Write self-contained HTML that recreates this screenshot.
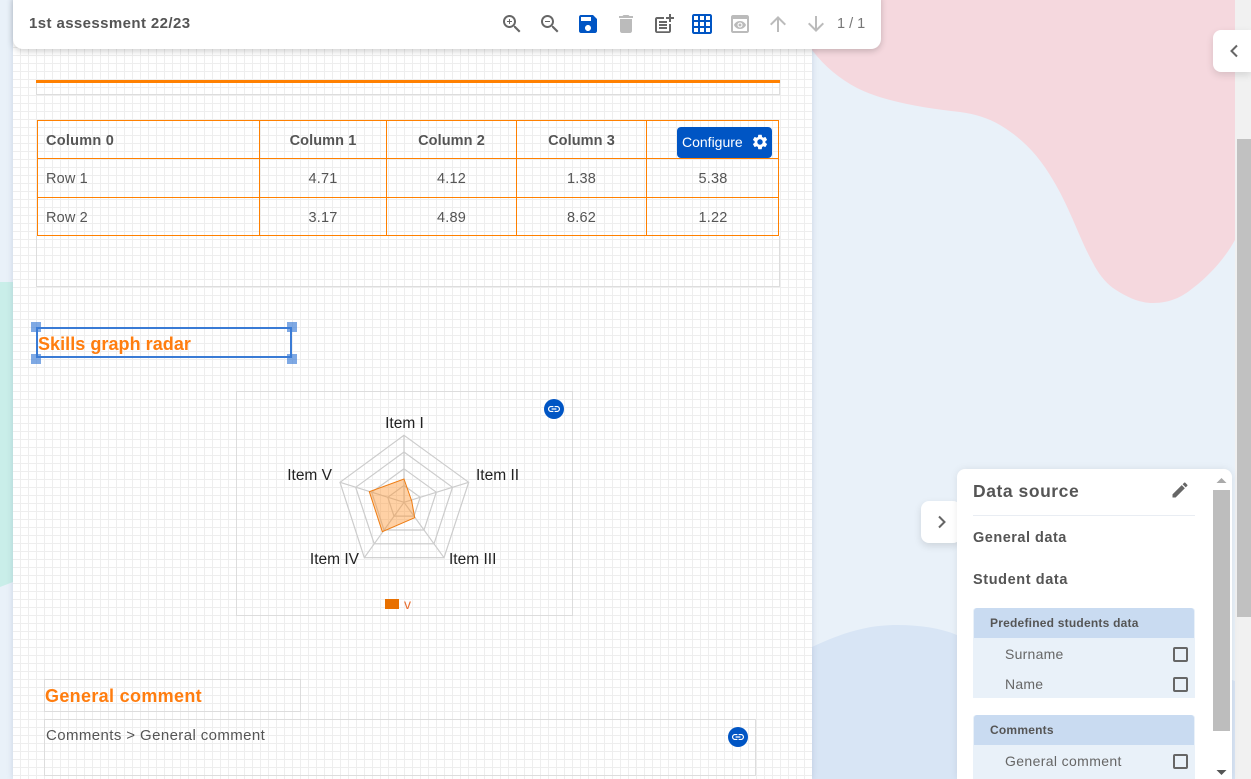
<!DOCTYPE html>
<html><head><meta charset="utf-8"><title>1st assessment 22/23</title>
<style>
html,body{margin:0;padding:0;width:1251px;height:779px;overflow:hidden;background:#e9f1f9;font-family:"Liberation Sans",sans-serif;color:#555}
#w{position:relative;width:1251px;height:779px;overflow:hidden}
.a{position:absolute}
.t{position:absolute;white-space:nowrap;line-height:20px}
.b{font-weight:bold}
svg{display:block}
.ic{position:absolute;top:12px;width:24px;height:24px}
.cell{position:absolute;text-align:center;font-size:14.5px;line-height:20px;letter-spacing:.2px;color:#555}
.cb{position:absolute;left:1173px;width:11px;height:11px;border:2px solid #666;border-radius:2px}
</style></head>
<body><div id="w">
<svg class="a" style="left:0;top:0" width="1251" height="779">
<path d="M812 50C825 67 840 79 857 88C885 102 925 108 960 112C975 114 988 118 1000 125C1025 140 1040 158 1053 180C1070 208 1080 240 1093 263C1098 273 1105 282 1113 288C1125 296 1138 303 1153 303C1170 303 1182 297 1193 288C1210 275 1225 258 1235 240V0H812Z" fill="#f5d8de"/>
<path d="M812 647C840 634 865 625 897 625C920 625 940 628 957 635C1050 640 1180 660 1235 681V779H812Z" fill="#d8e5f5"/>
<path d="M0 282H13V582L0 587Z" fill="#c9eee9"/>
</svg>
<div class="a" style="left:1235px;top:0;width:16px;height:779px;background:#f1f1f1"></div>
<div class="a" style="left:1237px;top:139px;width:14px;height:478px;background:#c1c1c1"></div>

<div class="a" style="left:13px;top:0;width:799px;height:779px;background-color:#fff;background-image:linear-gradient(to right,#eee 1px,transparent 1px),linear-gradient(to bottom,#eee 1px,transparent 1px);background-size:8px 8px;background-position:-1px 7px;box-shadow:0 0 6px rgba(60,80,120,.18)"></div>

<div class="a" style="left:36px;top:80px;width:742px;height:14px;border:1px solid #ddd;border-top:0"></div>
<div class="a" style="left:36px;top:80px;width:744px;height:3px;background:#ff8000"></div>

<div class="a" style="left:36px;top:236px;width:742px;height:50px;border:1px solid #ddd;border-top:0"></div>
<svg class="a" style="left:0;top:0" width="812" height="300" fill="none" stroke="#ff8000" stroke-width="1">
<path d="M37.5 120.5H778.5V235.5H37.5ZM37.5 158.5H778.5M37.5 197.5H778.5M259.5 120.5V235.5M386.5 120.5V235.5M516.5 120.5V235.5M646.5 120.5V235.5"/>
</svg>
<div class="t b" style="left:46px;top:131px;font-size:14.5px;letter-spacing:.25px">Column 0</div>
<div class="cell b" style="left:260px;top:131px;width:126px;letter-spacing:.1px">Column 1</div>
<div class="cell b" style="left:387px;top:131px;width:129px;letter-spacing:.1px">Column 2</div>
<div class="cell b" style="left:517px;top:131px;width:129px;letter-spacing:.1px">Column 3</div>
<div class="t" style="left:46px;top:169px;font-size:14.5px;letter-spacing:.15px">Row 1</div>
<div class="cell" style="left:260px;top:169px;width:126px">4.71</div>
<div class="cell" style="left:387px;top:169px;width:129px">4.12</div>
<div class="cell" style="left:517px;top:169px;width:129px">1.38</div>
<div class="cell" style="left:647px;top:169px;width:132px">5.38</div>
<div class="t" style="left:46px;top:208px;font-size:14.5px;letter-spacing:.15px">Row 2</div>
<div class="cell" style="left:260px;top:208px;width:126px">3.17</div>
<div class="cell" style="left:387px;top:208px;width:129px">4.89</div>
<div class="cell" style="left:517px;top:208px;width:129px">8.62</div>
<div class="cell" style="left:647px;top:208px;width:132px">1.22</div>

<div class="a" style="left:677px;top:127px;width:95px;height:31px;background:#0055c4;border-radius:4px"></div>
<div class="t" style="left:682px;top:132px;font-size:14px;color:#fff">Configure</div>
<svg class="a" style="left:751px;top:133px" width="18" height="18" viewBox="0 0 24 24" fill="#fff"><path d="M19.14 12.94c.04-.3.06-.61.06-.94 0-.32-.02-.64-.07-.94l2.03-1.58c.18-.14.23-.41.12-.61l-1.92-3.32c-.12-.22-.37-.29-.59-.22l-2.39.96c-.5-.38-1.03-.7-1.62-.94l-.36-2.54c-.04-.24-.24-.41-.48-.41h-3.84c-.24 0-.43.17-.47.41l-.36 2.54c-.59.24-1.13.57-1.62.94l-2.39-.96c-.22-.08-.47 0-.59.22L2.74 8.87c-.12.21-.08.47.12.61l2.03 1.58c-.05.3-.09.63-.09.94s.02.64.07.94l-2.03 1.58c-.18.14-.23.41-.12.61l1.92 3.32c.12.22.37.29.59.22l2.39-.96c.5.38 1.03.7 1.62.94l.36 2.54c.05.24.24.41.48.41h3.84c.24 0 .44-.17.47-.41l.36-2.54c.59-.24 1.13-.56 1.62-.94l2.39.96c.22.08.47 0 .59-.22l1.92-3.32c.12-.22.07-.47-.12-.61l-2.01-1.58zM12 15.6c-1.98 0-3.6-1.62-3.6-3.6s1.62-3.6 3.6-3.6 3.6 1.62 3.6 3.6-1.62 3.6-3.6 3.6z"/></svg>

<div class="a" style="left:36px;top:327px;width:252px;height:27px;border:2px solid #3a7bd5"></div>
<div class="a" style="left:31px;top:322px;width:10px;height:10px;background:rgba(58,123,213,.65)"></div>
<div class="a" style="left:287px;top:322px;width:10px;height:10px;background:rgba(58,123,213,.65)"></div>
<div class="a" style="left:31px;top:354px;width:10px;height:10px;background:rgba(58,123,213,.65)"></div>
<div class="a" style="left:287px;top:354px;width:10px;height:10px;background:rgba(58,123,213,.65)"></div>
<div class="t b" style="left:38px;top:334px;font-size:18px;color:#ff7d0f;letter-spacing:.05px">Skills graph radar</div>

<div class="a" style="left:236px;top:391px;width:335px;height:223px;border:1px solid #ddd"></div>
<svg class="a" style="left:230px;top:385px" width="350" height="235" viewBox="230 385 350 235" fill="none">
<g stroke="#ccc" stroke-width="1.2">
<path d="M404 435.3L468.7 482.3L444 557.7H364.3L340 482.3Z"/>
<path d="M404 452L452.5 487.3L434 543.8H374.2L355.7 487.3Z"/>
<path d="M404 468.8L436.3 492.2L424 530H384L371.7 492.2Z"/>
<path d="M404 485.5L420.2 497.3L414 516.1H394L387.8 497.3Z"/>
<path d="M404 502.3V435.3M404 502.3L468.7 482.3M404 502.3L444 557.7M404 502.3L364.3 557.7M404 502.3L340 482.3"/>
</g>
<path d="M404 479L411.7 501L414.7 517.7L382.3 531.7L369.3 491.7Z" fill="rgba(255,145,40,.42)" stroke="#ee7d14" stroke-width="1"/>
<rect x="385" y="599" width="14" height="10" fill="#e87000"/>
<g font-family="Liberation Sans,sans-serif" font-size="15.5" fill="#222">
<text x="404.500" y="428" text-anchor="middle">Item I</text>
<text x="476" y="480">Item II</text>
<text x="449" y="564">Item III</text>
<text x="359" y="564" text-anchor="end">Item IV</text>
<text x="332" y="480" text-anchor="end">Item V</text>
<text x="404" y="609" font-size="14" fill="#e87033">v</text>
</g>
<circle cx="554" cy="409" r="10" fill="#0055c4"/>
<path transform="translate(546.8 401.8) scale(.6)" fill="#fff" d="M3.9 12c0-1.71 1.39-3.1 3.1-3.1h4V7H7c-2.76 0-5 2.24-5 5s2.24 5 5 5h4v-1.9H7c-1.71 0-3.1-1.39-3.1-3.1zM8 13h8v-2H8v2zm9-6h-4v1.9h4c1.71 0 3.1 1.39 3.1 3.1s-1.39 3.1-3.1 3.1h-4V17h4c2.76 0 5-2.24 5-5s-2.24-5-5-5z"/>
</svg>

<div class="a" style="left:44px;top:679px;width:255px;height:31px;border:1px solid #ddd"></div>
<div class="t b" style="left:45px;top:686px;font-size:18px;color:#ff7d0f;letter-spacing:.33px">General comment</div>
<div class="a" style="left:44px;top:719px;width:710px;height:55px;border:1px solid #ddd"></div>
<div class="t" style="left:46px;top:726px;font-size:15px;letter-spacing:.4px">Comments &gt; General comment</div>
<svg class="a" style="left:728px;top:727px" width="20" height="20" viewBox="0 0 20 20"><circle cx="10" cy="10" r="10" fill="#0055c4"/><path transform="translate(2.8 2.8) scale(.6)" fill="#fff" d="M3.9 12c0-1.71 1.39-3.1 3.1-3.1h4V7H7c-2.76 0-5 2.24-5 5s2.24 5 5 5h4v-1.9H7c-1.71 0-3.1-1.39-3.1-3.1zM8 13h8v-2H8v2zm9-6h-4v1.9h4c1.71 0 3.1 1.39 3.1 3.1s-1.39 3.1-3.1 3.1h-4V17h4c2.76 0 5-2.24 5-5s-2.24-5-5-5z"/></svg>

<div class="a" style="left:13px;top:-10px;width:868px;height:59px;background:#fff;border-radius:10px;box-shadow:0 2px 7px rgba(0,0,0,.2)"></div>
<div class="t b" style="left:29px;top:14px;font-size:15px;letter-spacing:.4px">1st assessment 22/23</div>
<svg class="ic" style="left:500px" viewBox="0 0 24 24" fill="#666"><path d="M15.5 14h-.79l-.28-.27C15.41 12.59 16 11.11 16 9.5 16 5.91 13.09 3 9.5 3S3 5.91 3 9.5 5.91 16 9.5 16c1.61 0 3.09-.59 4.23-1.57l.27.28v.79l5 4.99L20.49 19l-4.99-5zm-6 0C7.01 14 5 11.99 5 9.5S7.01 5 9.5 5 14 7.01 14 9.5 11.99 14 9.5 14z"/><path d="M12 10h-2v2H9v-2H7V9h2V7h1v2h2v1z"/></svg>
<svg class="ic" style="left:538px" viewBox="0 0 24 24" fill="#666"><path d="M15.5 14h-.79l-.28-.27C15.41 12.59 16 11.11 16 9.5 16 5.91 13.09 3 9.5 3S3 5.91 3 9.5 5.91 16 9.5 16c1.61 0 3.09-.59 4.23-1.57l.27.28v.79l5 4.99L20.49 19l-4.99-5zm-6 0C7.01 14 5 11.99 5 9.5S7.01 5 9.5 5 14 7.01 14 9.5 11.99 14 9.5 14zM7 9h5v1H7z"/></svg>
<svg class="ic" style="left:576px" viewBox="0 0 24 24" fill="#0055c4"><path d="M17 3H5c-1.11 0-2 .9-2 2v14c0 1.1.89 2 2 2h14c1.1 0 2-.9 2-2V7l-4-4zm-5 16c-1.66 0-3-1.34-3-3s1.34-3 3-3 3 1.34 3 3-1.34 3-3 3zm3-10H5V5h10v4z"/></svg>
<svg class="ic" style="left:614px" viewBox="0 0 24 24" fill="#bbb"><path d="M6 19c0 1.1.9 2 2 2h8c1.1 0 2-.9 2-2V7H6v12zM19 4h-3.5l-1-1h-5l-1 1H5v2h14V4z"/></svg>
<svg class="ic" style="left:652px" viewBox="0 0 24 24" fill="#666"><path d="M17 19.22H5V7h7V5H5c-1.1 0-2 .9-2 2v12c0 1.1.9 2 2 2h12c1.1 0 2-.9 2-2v-7h-2v7.22z"/><path d="M19 2h-2v3h-3c.01.01 0 2 0 2h3v2.99c.01.01 2 0 2 0V7h3V5h-3V2zM7 9h8v2H7zM7 12v2h8v-2h-3zM7 15h8v2H7z"/></svg>
<svg class="ic" style="left:690px" viewBox="0 0 24 24" fill="#0055c4"><path d="M20 2H4c-1.1 0-2 .9-2 2v16c0 1.1.9 2 2 2h16c1.1 0 2-.9 2-2V4c0-1.1-.9-2-2-2zM8 20H4v-4h4v4zm0-6H4v-4h4v4zm0-6H4V4h4v4zm6 12h-4v-4h4v4zm0-6h-4v-4h4v4zm0-6h-4V4h4v4zm6 12h-4v-4h4v4zm0-6h-4v-4h4v4zm0-6h-4V4h4v4z"/></svg>
<svg class="ic" style="left:728px" viewBox="0 0 24 24" fill="#bbb"><path d="M19 3H5c-1.11 0-2 .9-2 2v14c0 1.1.89 2 2 2h14c1.1 0 2-.9 2-2V5c0-1.1-.89-2-2-2zm0 16H5V7h14v12zm-5.5-6c0 .83-.67 1.5-1.5 1.5s-1.5-.67-1.5-1.5.67-1.5 1.5-1.5 1.5.67 1.5 1.5zM12 9c-2.73 0-5.06 1.66-6 4 .94 2.34 3.27 4 6 4s5.06-1.66 6-4c-.94-2.34-3.27-4-6-4zm0 6.5c-1.38 0-2.5-1.12-2.5-2.5s1.12-2.5 2.5-2.5 2.5 1.12 2.5 2.5-1.12 2.5-2.5 2.5z"/></svg>
<svg class="ic" style="left:766px" viewBox="0 0 24 24" fill="#bbb"><path d="M4 12l1.41 1.41L11 7.83V20h2V7.83l5.58 5.59L20 12l-8-8-8 8z"/></svg>
<svg class="ic" style="left:804px" viewBox="0 0 24 24" fill="#bbb"><path d="M20 12l-1.41-1.41L13 16.17V4h-2v12.17l-5.58-5.59L4 12l8 8 8-8z"/></svg>
<div class="t" style="left:837px;top:14px;font-size:14.5px;letter-spacing:0;color:#777">1 / 1</div>

<div class="a" style="left:1213px;top:30px;width:38px;height:42px;background:#fff;border-radius:8px 0 0 8px;box-shadow:0 3px 8px rgba(0,0,0,.12)"></div>
<svg class="a" style="left:1226px;top:43px" width="16" height="16" viewBox="0 0 16 16" fill="none" stroke="#666" stroke-width="2"><path d="M11 2.500L5.500 8L11 13.500"/></svg>

<div class="a" style="left:921px;top:501px;width:40px;height:42px;background:#fff;border-radius:8px;box-shadow:0 3px 8px rgba(0,0,0,.12)"></div>
<div class="a" style="left:957px;top:469px;width:275px;height:310px;background:#fff;border-radius:8px 8px 0 0;box-shadow:0 0 8px rgba(0,0,0,.08)"></div>
<svg class="a" style="left:934px;top:514px" width="16" height="16" viewBox="0 0 16 16" fill="none" stroke="#666" stroke-width="2"><path d="M5 2.500L10.500 8L5 13.500"/></svg>
<div class="t b" style="left:973px;top:481px;font-size:17.5px;letter-spacing:.55px">Data source</div>
<svg class="a" style="left:1170px;top:480px" width="20" height="20" viewBox="0 0 24 24" fill="#666"><path d="M3 17.25V21h3.75L17.81 9.94l-3.75-3.75L3 17.25zM20.71 7.04c.39-.39.39-1.02 0-1.41l-2.34-2.34c-.39-.39-1.02-.39-1.41 0l-1.83 1.83 3.75 3.75 1.83-1.83z"/></svg>
<div class="a" style="left:973px;top:515px;width:222px;height:1px;background:#e9edf3"></div>
<div class="t b" style="left:973px;top:528px;font-size:14.5px;letter-spacing:.5px">General data</div>
<div class="t b" style="left:973px;top:570px;font-size:14.5px;letter-spacing:.6px">Student data</div>

<div class="a" style="left:973px;top:608px;width:222px;height:90px;background:#e9f1f9;border-radius:3px 3px 0 0"></div>
<div class="a" style="left:974px;top:608px;width:220px;height:30px;background:#c9dbf1;border-radius:3px 3px 0 0"></div>
<div class="t b" style="left:990px;top:613px;font-size:12px;letter-spacing:.22px">Predefined students data</div>
<div class="t" style="left:1005px;top:644px;font-size:14px;letter-spacing:.25px;color:#666">Surname</div>
<div class="cb" style="top:647px"></div>
<div class="t" style="left:1005px;top:674px;font-size:14px;letter-spacing:.25px;color:#666">Name</div>
<div class="cb" style="top:677px"></div>

<div class="a" style="left:973px;top:715px;width:222px;height:64px;background:#e9f1f9;border-radius:3px 3px 0 0"></div>
<div class="a" style="left:974px;top:715px;width:220px;height:30px;background:#c9dbf1;border-radius:3px 3px 0 0"></div>
<div class="t b" style="left:990px;top:720px;font-size:12px;letter-spacing:.22px">Comments</div>
<div class="t" style="left:1005px;top:751px;font-size:14px;letter-spacing:.37px;color:#666">General comment</div>
<div class="cb" style="top:754px"></div>

<div class="a" style="left:1213px;top:490px;width:17px;height:241px;background:#bdbdbd"></div>
<svg class="a" style="left:1213px;top:475px" width="17" height="10"><path d="M3.5 8L8.5 3L13.5 8Z" fill="#aaa"/></svg>
<svg class="a" style="left:1213px;top:768px" width="17" height="10"><path d="M3.5 2L8.5 7L13.5 2Z" fill="#555"/></svg>
</div></body></html>
